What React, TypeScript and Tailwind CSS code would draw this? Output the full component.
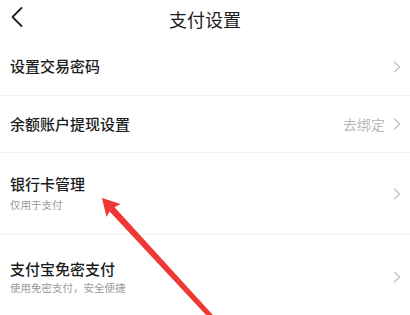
import { ChevronLeft, ChevronRight } from "lucide-react"

const font = { fontFamily: '"Noto Sans CJK SC", "Noto Sans", sans-serif' }

function Chevron() {
  return <ChevronRight className="h-[20px] w-[20px] text-[#bdbdbd]" strokeWidth={1.3} />
}

export default function App() {
  return (
    <div className="relative h-[315px] w-[410px] overflow-hidden bg-white" style={font}>
      {/* Header */}
      <div className="relative flex h-[38px] items-center justify-center">
        <ChevronLeft className="absolute left-[-1px] top-[-1px] h-[36px] w-[36px] text-[#222]" strokeWidth={1.2} />
        <span className="text-[18px] leading-none text-[#1c1c1c]">支付设置</span>
      </div>

      {/* 设置交易密码 */}
      <div className="flex h-[58px] items-center justify-between border-b border-[#f0f0f0] pl-[10px] pr-[3px]">
        <span className="text-[15px] font-medium text-[#1c1c1c]">设置交易密码</span>
        <Chevron />
      </div>

      {/* 余额账户提现设置 */}
      <div className="flex h-[57px] items-center justify-between border-b border-[#f0f0f0] pl-[10px] pr-[3px]">
        <span className="text-[15px] font-medium text-[#1c1c1c]">余额账户提现设置</span>
        <div className="flex items-center gap-[2px]">
          <span className="text-[14px] text-[#b8b8b8]">去绑定</span>
          <Chevron />
        </div>
      </div>

      {/* 银行卡管理 */}
      <div className="flex h-[82px] items-center justify-between border-b border-[#f0f0f0] pl-[10px] pr-[3px]">
        <div className="flex flex-col gap-[3px]">
          <span className="text-[15px] font-medium leading-[20px] text-[#1c1c1c]">银行卡管理</span>
          <span className="text-[10.5px] leading-[16px] text-[#9a9a9a]">仅用于支付</span>
        </div>
        <Chevron />
      </div>

      {/* 支付宝免密支付 */}
      <div className="flex h-[84px] items-center justify-between pl-[10px] pr-[3px]">
        <div className="flex flex-col gap-[1px]">
          <span className="text-[15px] font-medium leading-[20px] text-[#1c1c1c]">支付宝免密支付</span>
          <span className="text-[10.5px] leading-[16px] text-[#9a9a9a]">使用免密支付，安全便捷</span>
        </div>
        <Chevron />
      </div>

      {/* annotation arrow */}
      <svg className="pointer-events-none absolute inset-0" width="410" height="315" viewBox="0 0 410 315">
        <polygon
          points="102,198 120.5,204 114.6,207.2 216.8,319.3 213.2,322.7 109.6,211.4 106.5,217"
          fill="#ef3834"
        />
      </svg>
    </div>
  )
}
